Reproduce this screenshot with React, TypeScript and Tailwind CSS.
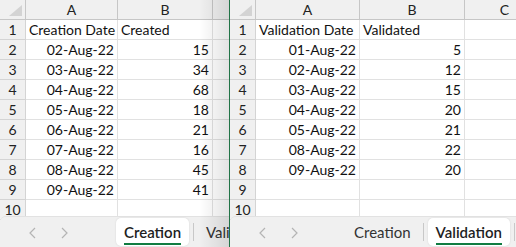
import React from 'react';

type Sheet = {
  widths: number[];
  head: string[];
  rows: string[][];
  tabs: { name: string; active: boolean }[];
  shadow?: boolean;
};

const left: Sheet = {
  widths: [92, 95],
  head: ['Creation Date', 'Created'],
  rows: [
    ['02-Aug-22', '15'],
    ['03-Aug-22', '34'],
    ['04-Aug-22', '68'],
    ['05-Aug-22', '18'],
    ['06-Aug-22', '21'],
    ['07-Aug-22', '16'],
    ['08-Aug-22', '45'],
    ['09-Aug-22', '41'],
  ],
  tabs: [
    { name: 'Creation', active: true },
    { name: 'Validation', active: false },
  ],
  shadow: true,
};

const right: Sheet = {
  widths: [104, 105],
  head: ['Validation Date', 'Validated'],
  rows: [
    ['01-Aug-22', '5'],
    ['02-Aug-22', '12'],
    ['03-Aug-22', '15'],
    ['04-Aug-22', '20'],
    ['05-Aug-22', '21'],
    ['08-Aug-22', '22'],
    ['09-Aug-22', '20'],
  ],
  tabs: [
    { name: 'Creation', active: false },
    { name: 'Validation', active: true },
  ],
};

const letters = ['A', 'B', 'C'];

function Chevron({ dir }: { dir: 'l' | 'r' }) {
  return (
    <svg width="8" height="12" viewBox="0 0 8 12" className="shrink-0">
      <polyline
        points={dir === 'l' ? '7,1 2,6 7,11' : '1,1 6,6 1,11'}
        fill="none"
        stroke="#b4b4b4"
        strokeWidth="1.2"
      />
    </svg>
  );
}

function Window({ sheet, className }: { sheet: Sheet; className: string }) {
  const cols = `26px ${sheet.widths[0]}px ${sheet.widths[1]}px 80px`;
  const totalRows = 10;

  return (
    <div className={`relative h-[247px] overflow-hidden bg-white flex flex-col ${className}`}>
      {/* grid */}
      <div className="flex-1 overflow-hidden">
        <div className="grid" style={{ gridTemplateColumns: cols }}>
          {/* column header row */}
          <div className="h-[20px] bg-[#f0f0f0] border-r border-b border-[#c6c6c6] relative">
            <div className="absolute right-[3px] bottom-[3px] w-0 h-0 border-l-[13px] border-l-transparent border-b-[11px] border-b-[#d3d3d3]" />
          </div>
          {letters.map((l) => (
            <div
              key={l}
              className="h-[20px] bg-[#f0f0f0] border-r border-b border-[#c6c6c6] flex items-end justify-center leading-[18px] text-[#222]"
            >
              {l}
            </div>
          ))}

          {Array.from({ length: totalRows }).map((_, i) => {
            const row = i === 0 ? sheet.head : sheet.rows[i - 1];
            return (
              <React.Fragment key={i}>
                <div className="h-[20px] bg-[#f0f0f0] border-r border-b border-[#d4d4d4] flex items-end justify-center leading-[18px] text-[#222]">
                  {i + 1}
                </div>
                <div
                  className={`h-[20px] border-r border-b border-[#e1e1e1] flex items-end px-[3px] leading-[18px] whitespace-nowrap text-[#111] ${
                    i === 0 ? 'justify-start' : 'justify-end'
                  }`}
                >
                  {row ? row[0] : ''}
                </div>
                <div
                  className={`h-[20px] border-r border-b border-[#e1e1e1] flex items-end px-[3px] leading-[18px] whitespace-nowrap text-[#111] ${
                    i === 0 ? 'justify-start' : 'justify-end'
                  }`}
                >
                  {row ? row[1] : ''}
                </div>
                <div className="h-[20px] border-r border-b border-[#e1e1e1]" />
              </React.Fragment>
            );
          })}
        </div>
      </div>

      {/* sheet tabs */}
      <div className="absolute left-0 right-0 bottom-0 h-[31px] bg-[#f0f0f0] rounded-tl-[6px] border-t border-[#e2e2e2] flex items-center">
        <div className="w-[116px] shrink-0 flex items-center pl-[28px] gap-[25px] pt-[1px]">
          <Chevron dir="l" />
          <Chevron dir="r" />
        </div>
        {sheet.tabs.map((t, i) => (
          <React.Fragment key={t.name}>
            {i > 0 && <div className="w-px h-[18px] bg-[#c8c8c8] mx-[4px] shrink-0" />}
            <div
              className={`h-[28px] px-[8px] shrink-0 flex items-center rounded-[5px] whitespace-nowrap text-[15px] ${
                t.active
                  ? 'bg-white font-semibold text-[#1e1e1e] shadow-[0_0_2px_rgba(0,0,0,0.12)]'
                  : 'text-[#333]'
              }`}
            >
              <span className="relative leading-[20px]">
                {t.name}
                {t.active && (
                  <span className="absolute left-0 right-0 -bottom-[3px] h-[2px] bg-[#107c41]" />
                )}
              </span>
            </div>
          </React.Fragment>
        ))}
        {!sheet.shadow && <div className="w-px h-[18px] bg-[#c8c8c8] ml-[4px] shrink-0" />}
      </div>

      {sheet.shadow && (
        <div className="absolute top-0 bottom-0 right-0 w-[30px] bg-gradient-to-r from-transparent to-[rgba(0,0,0,0.11)] pointer-events-none" />
      )}
    </div>
  );
}

export default function App() {
  return (
    <div className="w-[516px] h-[247px] flex overflow-hidden bg-white font-['Lato',sans-serif] text-[14px]">
      <Window sheet={left} className="w-[229px] shrink-0" />
      <Window sheet={right} className="w-[287px] shrink-0 border-l border-[#217346]" />
    </div>
  );
}
